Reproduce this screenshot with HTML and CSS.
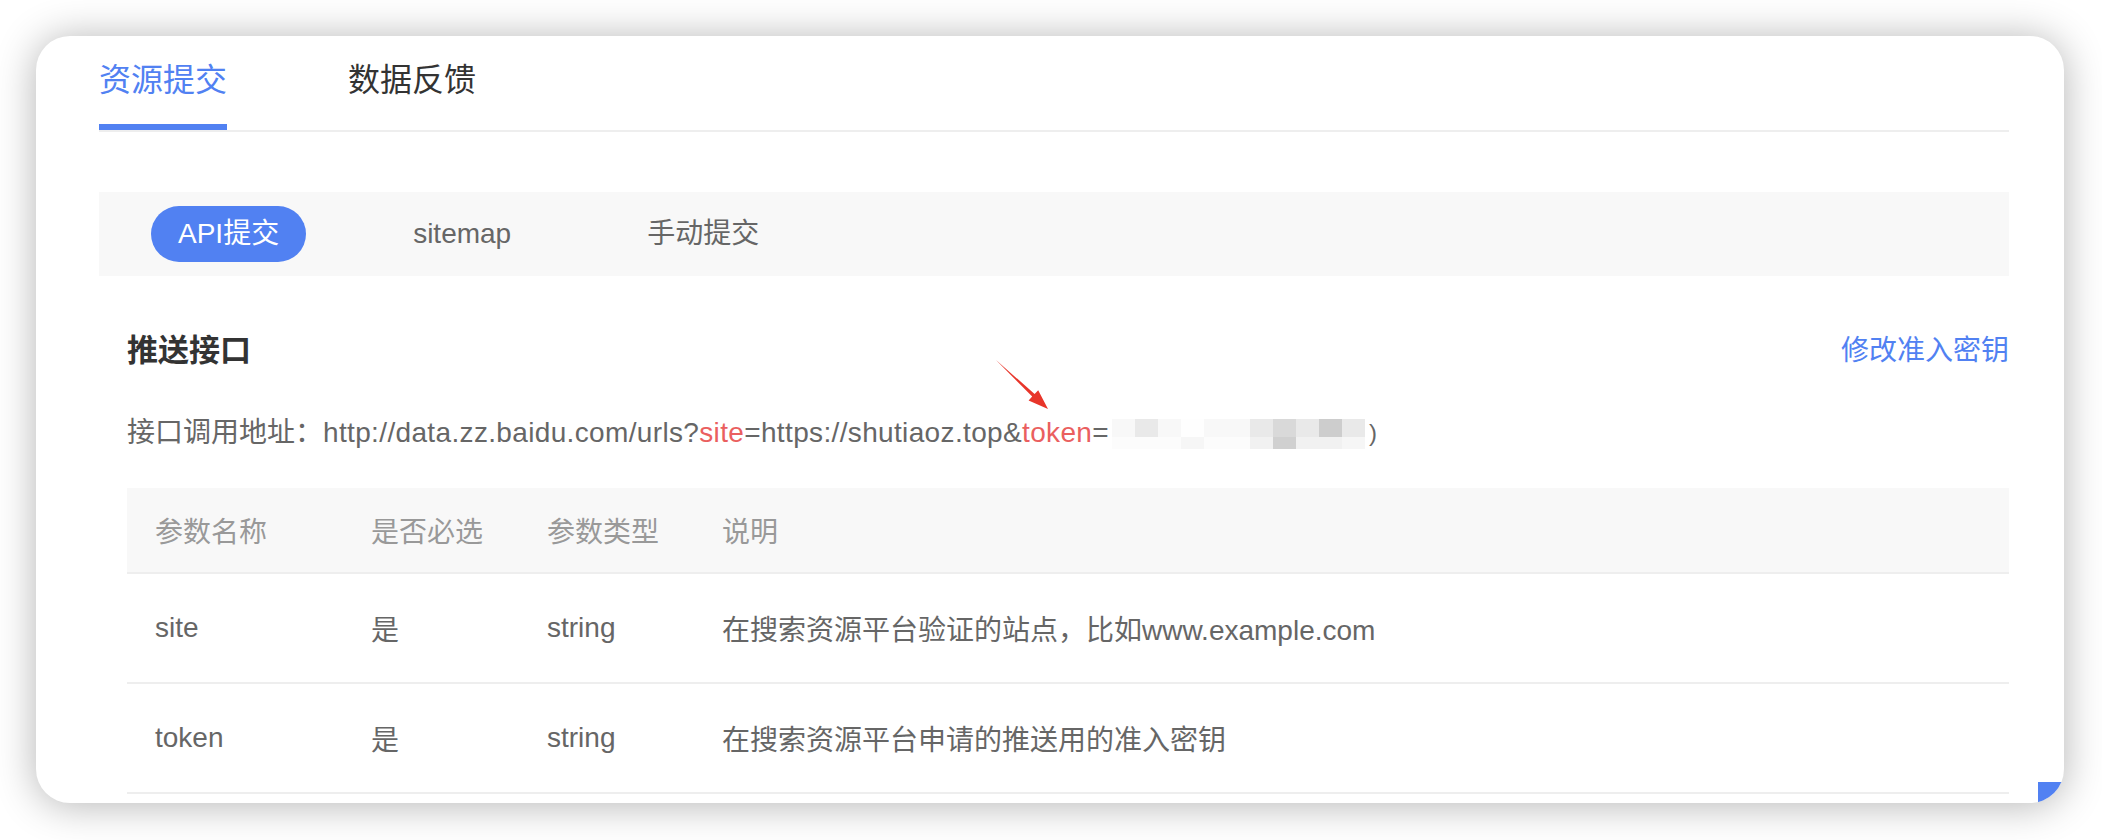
FILE: index.html
```html
<!DOCTYPE html>
<html lang="zh-CN">
<head>
<meta charset="utf-8">
<title>资源提交</title>
<link rel="stylesheet" href="styles.css">
</head>
<body>
<div class="page">
<div class="card">
  <div class="tabs">
    <div class="tab active">资源提交</div>
    <div class="tab">数据反馈</div>
  </div>

  <div class="segments">
    <div class="seg active">API提交</div>
    <div class="seg">sitemap</div>
    <div class="seg">手动提交</div>
  </div>

  <div class="section">
    <div class="section-head">
      <h2 class="title">推送接口</h2>
      <a class="link">修改准入密钥</a>
    </div>
    <p class="url">接口调用地址：<span class="url-text">http://data.zz.baidu.com/urls?<span class="hl">site</span>=https://shutiaoz.top&amp;<span class="hl">token</span>=</span><span class="mosaic"><i class="c1"></i><i class="c3"></i><i class="c1"></i><i class="c0"></i><i class="c1"></i><i class="c1"></i><i class="c3"></i><i class="c4"></i><i class="c3"></i><i class="c5"></i><i class="c3"></i><i class="d0"></i><i class="d0"></i><i class="d0"></i><i class="d1"></i><i class="d0"></i><i class="d0"></i><i class="d2"></i><i class="d4"></i><i class="d2"></i><i class="d2"></i><i class="d1"></i></span><span class="tail">)</span></p>

    <table class="params">
      <colgroup>
        <col class="w1"><col class="w2"><col class="w3"><col>
      </colgroup>
      <thead>
        <tr><th>参数名称</th><th>是否必选</th><th>参数类型</th><th>说明</th></tr>
      </thead>
      <tbody>
        <tr><td>site</td><td>是</td><td>string</td><td>在搜索资源平台验证的站点，比如www.example.com</td></tr>
        <tr><td>token</td><td>是</td><td>string</td><td>在搜索资源平台申请的推送用的准入密钥</td></tr>
      </tbody>
    </table>
  </div>

  <svg class="arrow" width="70" height="70" viewBox="0 0 70 70">
    <polygon points="10,10 48.6,44 52.2,40.2 62,59 42.6,50.4 46.2,46.6" fill="#e8352a"/>
  </svg>
  <div class="totop"></div>
</div>
</div>
</body>
</html>
```

FILE: styles.css
```css
* { box-sizing: border-box; }

html, body {
  margin: 0;
  background: #ffffff;
  font-family: "Liberation Sans", "Noto Sans CJK SC", sans-serif;
}

.page {
  width: 2102px;
  height: 840px;
  padding: 36px 38px 37px 36px;
  overflow: hidden;
}

.card {
  position: relative;
  width: 2028px;
  height: 767px;
  padding: 22px 55px 0 63px;
  background: #ffffff;
  border-radius: 34px;
  box-shadow: 0 2px 40px rgba(0, 0, 0, 0.3);
  overflow: hidden;
}

.tabs {
  display: flex;
  gap: 121px;
  border-bottom: 2px solid #eeeeee;
}

.tab {
  font-size: 32px;
  line-height: 44px;
  padding-bottom: 22px;
  border-bottom: 6px solid transparent;
  color: #333333;
}

.tab.active {
  color: #5181f2;
  border-bottom-color: #5181f2;
}

.segments {
  display: flex;
  gap: 79px;
  margin-top: 60px;
  padding: 14px 52px;
  background: #f8f8f8;
}

.seg {
  height: 56px;
  line-height: 56px;
  padding: 0 28px;
  font-size: 28px;
  color: #666666;
  border-radius: 28px;
}

.seg.active {
  padding: 0 27px;
  background: #5181f2;
  color: #ffffff;
}

.seg:last-child {
  margin-left: 1px;
}

.section {
  padding-left: 28px;
}

.section-head {
  display: flex;
  justify-content: space-between;
  align-items: center;
  margin-top: 53px;
  height: 44px;
}

.title {
  margin: 0;
  font-size: 31px;
  line-height: 44px;
  font-weight: bold;
  color: #333333;
}

.link {
  font-size: 28px;
  line-height: 44px;
  color: #5181f2;
}

.url {
  display: flex;
  align-items: center;
  margin: 40px 0 0;
  height: 40px;
  font-size: 28px;
  line-height: 40px;
  color: #666666;
  white-space: nowrap;
}

.url-text {
  letter-spacing: 0.35px;
}

.hl {
  color: #ea5f5f;
}

.mosaic {
  display: grid;
  grid-template-columns: repeat(11, 23px);
  grid-template-rows: 18px 12px;
  margin-left: 3px;
  margin-top: 2px;
}

.mosaic i { display: block; }
.mosaic .c0 { background: #fefefe; }
.mosaic .c1 { background: #f8f8f8; }
.mosaic .c3 { background: #e9e9e9; }
.mosaic .c4 { background: #d9d9d9; }
.mosaic .c5 { background: #cdcdcd; }
.mosaic .d0 { background: #fcfcfc; }
.mosaic .d1 { background: #f6f6f6; }
.mosaic .d2 { background: #f1f1f1; }
.mosaic .d4 { background: #d0d0d0; }

.tail {
  margin-left: 4px;
  font-size: 24px;
  color: #666666;
}

.params {
  width: 100%;
  margin-top: 35px;
  border-collapse: collapse;
  table-layout: fixed;
}

.params .w1 { width: 216px; }
.params .w2 { width: 176px; }
.params .w3 { width: 175px; }

.params th,
.params td {
  padding: 0 0 0 28px;
  text-align: left;
  font-size: 28px;
  border-bottom: 2px solid #eeeeee;
}

.params th {
  height: 85px;
  font-weight: normal;
  color: #999999;
  background: #f8f8f8;
}

.params td {
  height: 110px;
  color: #666666;
}

.arrow {
  position: absolute;
  left: 950px;
  top: 314px;
}

.totop {
  position: absolute;
  left: 2002px;
  top: 746px;
  width: 40px;
  height: 40px;
  background: #5181f2;
}
```
